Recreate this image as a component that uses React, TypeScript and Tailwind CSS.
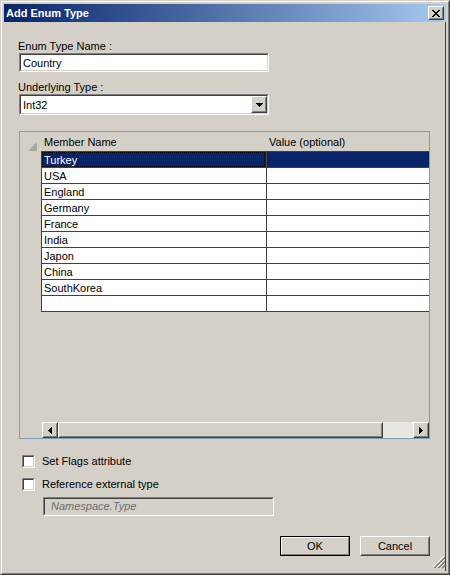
import React from "react";

const sunkenOuter =
  "border border-t-[#808080] border-l-[#808080] border-b-white border-r-white";
const sunkenInner =
  "border border-t-[#404040] border-l-[#404040] border-b-[#d4d0c8] border-r-[#d4d0c8]";
const raisedOuter =
  "border border-t-white border-l-white border-b-[#404040] border-r-[#404040]";
const raisedInner =
  "border border-t-[#d4d0c8] border-l-[#d4d0c8] border-b-[#808080] border-r-[#808080]";

function PixelGlyph({ rows, color = "#000" }: { rows: string[]; color?: string }) {
  const w = rows[0].length;
  const h = rows.length;
  const rects: React.ReactNode[] = [];
  rows.forEach((r, y) => {
    for (let x = 0; x < r.length; x++) {
      if (r[x] === "X") rects.push(<rect key={`${x}-${y}`} x={x} y={y} width={1} height={1} fill={color} />);
    }
  });
  return (
    <svg width={w} height={h} viewBox={`0 0 ${w} ${h}`} shapeRendering="crispEdges" className="block">
      {rects}
    </svg>
  );
}

const closeGlyph = [
  "XX....XX",
  ".XX..XX.",
  "..XXXX..",
  "...XX...",
  "..XXXX..",
  ".XX..XX.",
  "XX....XX",
];
const downGlyph = ["XXXXXXX", ".XXXXX.", "..XXX..", "...X..."];
const leftGlyph = ["...X", "..XX", ".XXX", "XXXX", ".XXX", "..XX", "...X"];
const rightGlyph = ["X...", "XX..", "XXX.", "XXXX", "XXX.", "XX..", "X..."];

const members = ["Turkey", "USA", "England", "Germany", "France", "India", "Japon", "China", "SouthKorea", ""];

function Checkbox() {
  return (
    <div className={`w-[13px] h-[13px] ${sunkenOuter}`}>
      <div className={`w-full h-full ${sunkenInner} bg-white`} />
    </div>
  );
}

export default function App() {
  return (
    <div className="w-[450px] h-[575px] bg-[#d4d0c8] border border-t-[#d4d0c8] border-l-[#d4d0c8] border-r-[#404040] border-b-[#404040] font-['Liberation_Sans',Arial,sans-serif] text-[11px] leading-[13px] text-black overflow-hidden select-none">
      <div className="h-full border border-t-white border-l-white border-r-[#808080] border-b-[#808080] p-[2px] flex flex-col">
        {/* Title bar */}
        <div className="h-[18px] shrink-0 flex items-center bg-linear-to-r from-[#0a246a] to-[#a6caf0]">
          <span className="pl-[2px] font-bold text-white">Add Enum Type</span>
          <div className={`ml-auto mr-[2px] w-[16px] h-[14px] bg-[#d4d0c8] ${raisedOuter}`}>
            <div className={`w-full h-full ${raisedInner} flex items-center justify-center`}>
              <PixelGlyph rows={closeGlyph} />
            </div>
          </div>
        </div>

        {/* Body */}
        <div className="flex-1 relative border-r border-r-[#404040] flex flex-col pl-[14px]">
          <div className="mt-[18px] h-[13px]">Enum Type Name :</div>
          <div className={`ml-px w-[250px] h-[19px] ${sunkenOuter}`}>
            <div className={`w-full h-full ${sunkenInner} bg-white pl-[2px] pt-[2px]`}>Country</div>
          </div>

          <div className="mt-[9px] h-[13px]">Underlying Type :</div>
          <div className={`ml-px w-[250px] h-[21px] ${sunkenOuter}`}>
            <div className={`w-full h-full ${sunkenInner} bg-white flex`}>
              <div className="flex-1 pl-[2px] pt-[3px]">Int32</div>
              <div className={`w-[16px] h-full bg-[#d4d0c8] ${raisedOuter}`}>
                <div className={`w-full h-full ${raisedInner} flex items-center justify-center`}>
                  <PixelGlyph rows={downGlyph} />
                </div>
              </div>
            </div>
          </div>

          {/* Grid */}
          <div className="mt-[16px] ml-px w-[411px] h-[308px] border border-[#7f9db9] flex flex-col overflow-hidden">
            <div className="h-[19px] shrink-0 flex">
              <div className="w-[21px] flex items-end">
                <svg width="9" height="9" viewBox="0 0 9 9" className="block ml-[8px]">
                  <polygon points="9,0 9,9 0,9" fill="#aba79f" />
                </svg>
              </div>
              <div className="w-[225px] pl-[3px] pt-[4px]">Member Name</div>
              <div className="flex-1 pl-[3px] pt-[4px]">Value (optional)</div>
            </div>

            <div className="ml-[21px] border-t border-l border-[#404040] shrink-0">
              {members.map((m, i) => {
                const sel = i === 0;
                return (
                  <div
                    key={i}
                    className={`h-[16px] flex border-b border-[#404040] ${sel ? "bg-[#0a246a] text-white" : "bg-white"}`}
                  >
                    <div className="w-[225px] shrink-0 border-r border-[#404040]">
                      {sel ? (
                        <div className="h-full mr-px border border-dotted border-black pl-px pt-px">{m}</div>
                      ) : (
                        <div className="pl-[2px] pt-[2px] whitespace-nowrap">{m}</div>
                      )}
                    </div>
                    <div className="flex-1" />
                  </div>
                );
              })}
            </div>

            <div className="flex-1" />

            <div className="h-[16px] shrink-0 ml-[22px] flex">
              <div className={`w-[16px] h-full bg-[#d4d0c8] ${raisedOuter}`}>
                <div className={`w-full h-full ${raisedInner} flex items-center justify-center`}>
                  <PixelGlyph rows={leftGlyph} />
                </div>
              </div>
              <div className={`w-[325px] h-full bg-[#d4d0c8] ${raisedOuter}`}>
                <div className={`w-full h-full ${raisedInner}`} />
              </div>
              <div className="flex-1 h-full bg-[#e9e7e3]" />
              <div className={`w-[16px] h-full bg-[#d4d0c8] ${raisedOuter}`}>
                <div className={`w-full h-full ${raisedInner} flex items-center justify-center`}>
                  <PixelGlyph rows={rightGlyph} />
                </div>
              </div>
            </div>
          </div>

          {/* Checkboxes */}
          <div className="mt-[16px] ml-[4px] h-[13px] flex items-center">
            <Checkbox />
            <span className="ml-[7px]">Set Flags attribute</span>
          </div>
          <div className="mt-[10px] ml-[4px] h-[13px] flex items-center">
            <Checkbox />
            <span className="ml-[7px]">Reference external type</span>
          </div>

          <div className={`mt-[6px] ml-[25px] w-[231px] h-[19px] ${sunkenOuter}`}>
            <div className={`w-full h-full ${sunkenInner} bg-[#d4d0c8] pl-[6px] pt-px italic text-[#6d6d6d]`}>
              Namespace.Type
            </div>
          </div>

          {/* Buttons */}
          <div className="mt-[20px] ml-[262px] flex gap-[10px]">
            <div className="w-[70px] h-[20px] border border-black">
              <div className="w-full h-full border border-t-white border-l-white border-b-[#808080] border-r-[#808080] flex items-center justify-center">
                OK
              </div>
            </div>
            <div className={`w-[70px] h-[20px] ${raisedOuter}`}>
              <div className={`w-full h-full ${raisedInner} flex items-center justify-center`}>Cancel</div>
            </div>
          </div>

          {/* Size grip */}
          <svg width="12" height="12" viewBox="0 0 12 12" shapeRendering="crispEdges" className="absolute right-0 bottom-[3px] block">
            <path d="M11 0 L0 11" stroke="#ffffff" strokeWidth="1" />
            <path d="M12 1 L1 12 M12 2 L2 12" stroke="#808080" strokeWidth="1" />
            <path d="M11 4 L4 11" stroke="#ffffff" strokeWidth="1" />
            <path d="M12 5 L5 12 M12 6 L6 12" stroke="#808080" strokeWidth="1" />
            <path d="M11 8 L8 11" stroke="#ffffff" strokeWidth="1" />
            <path d="M12 9 L9 12 M12 10 L10 12" stroke="#808080" strokeWidth="1" />
          </svg>
        </div>
      </div>
    </div>
  );
}
